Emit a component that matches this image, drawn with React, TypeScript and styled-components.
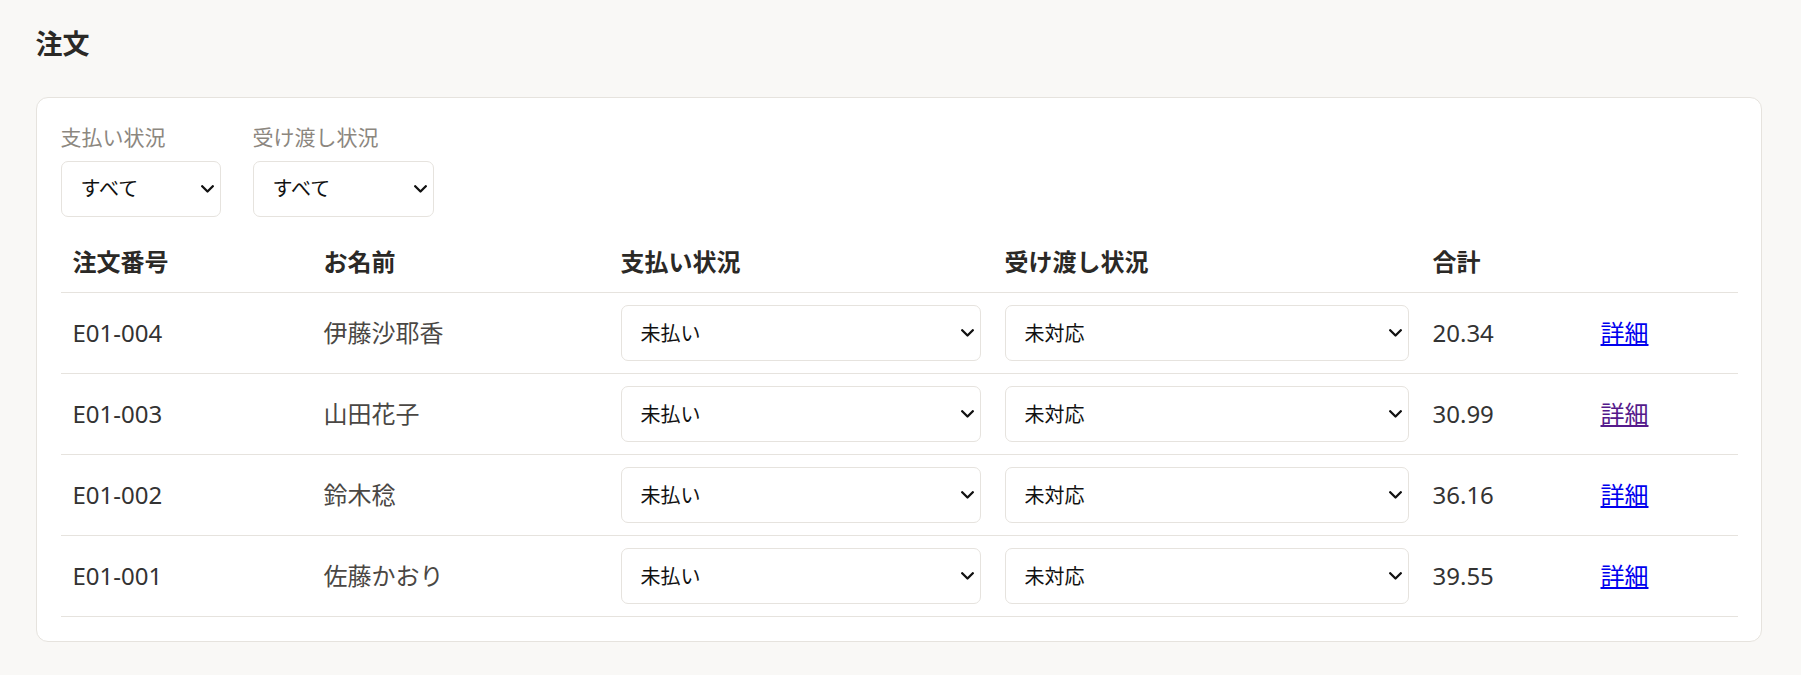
import React from 'react';
import styled, { createGlobalStyle } from 'styled-components';

const GlobalStyle = createGlobalStyle`
  * {
    box-sizing: border-box;
  }
  body {
    margin: 0;
    background: #f9f8f6;
    font-family: "Noto Sans", "Noto Sans CJK JP", sans-serif;
    color: #333;
  }
`;

const Page = styled.div`
  min-height: 100vh;
  padding: 24px 39px 24px 35.5px;
`;

const Title = styled.h1`
  margin: 0 0 32px;
  font-size: 27px;
  line-height: 40.5px;
  font-weight: 700;
  color: #2b2926;
`;

const Card = styled.section`
  background: #fff;
  border: 1px solid #e6e3de;
  border-radius: 12px;
  padding: 24px;
`;

const Filters = styled.div`
  display: flex;
  gap: 31.5px;
  margin-bottom: 15.5px;
`;

const FilterGroup = styled.label`
  display: flex;
  flex-direction: column;
`;

const FilterLabel = styled.span`
  font-size: 21px;
  line-height: 31.5px;
  color: #8c877f;
  margin-bottom: 7.5px;
`;

const SelectWrap = styled.div<{ $width?: number }>`
  position: relative;
  width: ${(p) => (p.$width ? `${p.$width}px` : '100%')};
`;

const Select = styled.select`
  appearance: none;
  width: 100%;
  height: 56px;
  padding: 0 30px 0 19px;
  border: 1px solid #e6e3de;
  border-radius: 7px;
  background: #fff;
  font-family: "Noto Sans", "Noto Sans CJK JP", sans-serif;
  font-size: 20px;
  color: #111;
  outline: none;
`;

const Chevron = styled.svg`
  position: absolute;
  right: 7px;
  top: 50%;
  width: 13px;
  height: 8px;
  margin-top: -4px;
  pointer-events: none;
`;

const Table = styled.table`
  width: 100%;
  border-collapse: collapse;
  table-layout: fixed;
`;

const Th = styled.th<{ $width: number }>`
  width: ${(p) => p.$width}px;
  padding: 12px;
  text-align: left;
  font-size: 24px;
  line-height: 36px;
  font-weight: 700;
  color: #2b2926;
  border-bottom: 1px solid #e6e3de;
`;

const Td = styled.td<{ $soft?: boolean }>`
  padding: 12px;
  font-size: 24px;
  line-height: 36px;
  color: ${(p) => (p.$soft ? '#4a4744' : '#333')};
  vertical-align: middle;
`;

const Row = styled.tr`
  border-bottom: 1px solid #e6e3de;
`;

const DetailLink = styled.a<{ $visited?: boolean }>`
  color: ${(p) => (p.$visited ? '#551a8b' : '#0000ee')};
  text-decoration: underline;
`;

const ChevronIcon = () => (
  <Chevron viewBox="0 0 13 8">
    <polyline
      points="1.2,1.2 6.5,6.5 11.8,1.2"
      fill="none"
      stroke="#111"
      strokeWidth="2.3"
      strokeLinecap="round"
      strokeLinejoin="round"
    />
  </Chevron>
);

interface DropdownProps {
  options: string[];
  width?: number;
}

const Dropdown: React.FC<DropdownProps> = ({ options, width }) => (
  <SelectWrap $width={width}>
    <Select defaultValue={options[0]}>
      {options.map((o) => (
        <option key={o} value={o}>
          {o}
        </option>
      ))}
    </Select>
    <ChevronIcon />
  </SelectWrap>
);

const PAYMENT_OPTIONS = ['未払い', '支払い済み'];
const DELIVERY_OPTIONS = ['未対応', '受け渡し済み'];

const COLUMNS = [
  { title: '注文番号', width: 251 },
  { title: 'お名前', width: 297 },
  { title: '支払い状況', width: 384 },
  { title: '受け渡し状況', width: 428 },
  { title: '合計', width: 168 },
  { title: '', width: 149 },
];

const orders = [
  { id: 'E01-004', name: '伊藤沙耶香', total: '20.34', visited: false },
  { id: 'E01-003', name: '山田花子', total: '30.99', visited: true },
  { id: 'E01-002', name: '鈴木稔', total: '36.16', visited: false },
  { id: 'E01-001', name: '佐藤かおり', total: '39.55', visited: false },
];

export default function App() {
  return (
    <Page>
      <GlobalStyle />
      <Title>注文</Title>
      <Card>
        <Filters>
          <FilterGroup>
            <FilterLabel>支払い状況</FilterLabel>
            <Dropdown options={['すべて', ...PAYMENT_OPTIONS]} width={160.5} />
          </FilterGroup>
          <FilterGroup>
            <FilterLabel>受け渡し状況</FilterLabel>
            <Dropdown options={['すべて', ...DELIVERY_OPTIONS]} width={181.5} />
          </FilterGroup>
        </Filters>
        <Table>
          <thead>
            <tr>
              {COLUMNS.map((c, i) => (
                <Th key={i} $width={c.width}>
                  {c.title}
                </Th>
              ))}
            </tr>
          </thead>
          <tbody>
            {orders.map((order) => (
              <Row key={order.id}>
                <Td>{order.id}</Td>
                <Td $soft>{order.name}</Td>
                <Td>
                  <Dropdown options={PAYMENT_OPTIONS} />
                </Td>
                <Td>
                  <Dropdown options={DELIVERY_OPTIONS} />
                </Td>
                <Td>{order.total}</Td>
                <Td>
                  <DetailLink href={`#${order.id}`} $visited={order.visited}>
                    詳細
                  </DetailLink>
                </Td>
              </Row>
            ))}
          </tbody>
        </Table>
      </Card>
    </Page>
  );
}
